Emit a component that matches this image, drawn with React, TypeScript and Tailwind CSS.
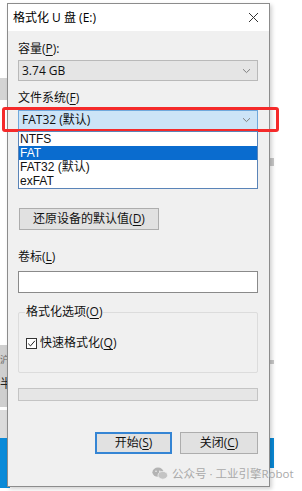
import React from 'react';

const font = { fontFamily: '"Open Sans", "Noto Sans CJK SC", sans-serif' };
const listFont = { fontFamily: '"Liberation Sans", "Noto Sans CJK SC", sans-serif' };

const Chevron: React.FC = () => (
    <svg width="9" height="6" viewBox="0 0 9 6" className="shrink-0">
        <path d="M1 1.2 L4.5 4.6 L8 1.2" fill="none" stroke="#808080" strokeWidth="1" />
    </svg>
);

const U: React.FC<{ children: React.ReactNode }> = ({ children }) => <span className="underline underline-offset-2">{children}</span>;

const WinButton: React.FC<{ children: React.ReactNode; primary?: boolean; className?: string }> = ({ children, primary, className }) => (
    <div
        className={`h-[22px] flex items-center justify-center bg-[#e1e1e1] text-[12px] text-[#111] ${primary ? 'border-2 border-[#3585d4]' : 'border border-[#adadad]'} ${className ?? ''}`}
    >
        {children}
    </div>
);

const App: React.FC = () => {
    return (
        <div className="relative w-[302px] h-[491px] overflow-hidden bg-white" style={font}>
            {/* desktop bits peeking out behind the dialog */}
            <div className="absolute left-0 top-[78px] w-[7px] h-[22px] bg-[#d4d4d4]" />
            <div className="absolute left-0 top-[345px] w-[7px] h-[62px] bg-[#cfcfcf]" />
            <div className="absolute left-0 top-[355px] text-[9px] leading-none text-[#666]">沪</div>
            <div className="absolute left-0 top-[378px] text-[12px] leading-none text-[#222]">半</div>
            <div className="absolute left-0 top-[410px] w-[7px] h-[28px] bg-[#dcdcdc]" />
            <div className="absolute left-0 top-[438px] w-[10px] h-[50px] bg-[#0a8ad8]" />
            <div className="absolute left-[268px] top-[438px] w-[6px] h-[30px] bg-[#0a8ad8]" />
            <div className="absolute left-[270px] top-[158px] w-[4px] h-[8px] bg-[#c9c9c9]" />
            <div className="absolute left-[270px] top-[360px] w-[4px] h-[4px] bg-[#c9c9c9]" />

            {/* dialog window */}
            <div className="absolute left-[7px] top-[3px] w-[263px] h-[484px] border border-[#8c8c8c] bg-[#f0f0f0] shadow-[2px_2px_4px_rgba(0,0,0,0.18)] flex flex-col">
                <div className="h-[27px] bg-white flex items-center justify-between pl-[5px] pr-[10px]">
                    <span className="text-[12px] text-black">格式化 U 盘 (E:)</span>
                    <svg width="11" height="11" viewBox="0 0 11 11">
                        <path d="M1 1 L10 10 M10 1 L1 10" stroke="#333" strokeWidth="1" />
                    </svg>
                </div>

                <div className="flex flex-col pl-[10px] pr-[11px]">
                    <div className="mt-[10px] h-[16px] leading-[16px] text-[12px] text-[#111]">
                        容量(<U>P</U>):
                    </div>
                    <div className="mt-[3px] h-[21px] bg-[#e5e5e5] border border-[#b9b9b9] flex items-center justify-between pl-[3px] pr-[6px]">
                        <span className="text-[12px] text-[#111]">3.74 GB</span>
                        <Chevron />
                    </div>

                    <div className="mt-[9px] h-[16px] leading-[16px] text-[12px] text-[#111]">
                        文件系统(<U>F</U>)
                    </div>
                    <div className="relative mt-[4px]">
                        <div className="h-[20px] bg-[#cce4f7] border border-[#6fa8dc] flex items-center justify-between pl-[3px] pr-[6px]">
                            <span className="text-[12px] text-[#111]">FAT32 (默认)</span>
                            <Chevron />
                        </div>
                        {/* red annotation frame */}
                        <div className="absolute left-[-16px] right-[-21px] top-[-3px] h-[25px] border-[3px] border-[#f52a2a] rounded-[3px]" />
                        {/* open dropdown list */}
                        <div className="absolute left-0 right-0 top-[21px] bg-white border border-[#5a84b8] flex flex-col text-[12px] text-[#111]" style={listFont}>
                            <div className="h-[14px] leading-[14px] pl-[1px]">NTFS</div>
                            <div className="h-[14px] leading-[14px] pl-[1px] bg-[#0a6ccf] text-white">FAT</div>
                            <div className="h-[14px] leading-[14px] pl-[1px]">FAT32 (默认)</div>
                            <div className="h-[14px] leading-[14px] pl-[1px]">exFAT</div>
                        </div>
                    </div>

                    <WinButton className="mt-[78px] w-[140px] ml-[1px]">
                        还原设备的默认值(<U>D</U>)
                    </WinButton>

                    <div className="mt-[19px] h-[16px] leading-[16px] text-[12px] text-[#111]">
                        卷标(<U>L</U>)
                    </div>
                    <div className="mt-[6px] h-[22px] bg-white border border-[#8a8a8a]" />

                    <div className="relative mt-[19px] h-[61px] border border-[#dcdcdc] rounded-[2px]">
                        <span className="absolute left-[6px] top-[-9px] px-[1px] bg-[#f0f0f0] text-[12px] leading-[16px] text-[#111]">
                            格式化选项(<U>O</U>)
                        </span>
                        <div className="flex items-center gap-[3px] mt-[21px] ml-[7px]">
                            <div className="w-[11px] h-[11px] border border-[#333] bg-white flex items-center justify-center">
                                <svg width="9" height="9" viewBox="0 0 9 9">
                                    <path d="M1.2 4.6 L3.5 6.9 L7.9 1.8" fill="none" stroke="#222" strokeWidth="1" />
                                </svg>
                            </div>
                            <span className="text-[12px] text-[#111]">
                                快速格式化(<U>Q</U>)
                            </span>
                        </div>
                    </div>

                    <div className="mt-[15px] h-[13px] bg-[#e6e6e6] border border-[#c4c4c4]" />

                    <div className="mt-[31px] flex justify-end gap-[8px]">
                        <WinButton primary className="w-[77px]">
                            开始(<U>S</U>)
                        </WinButton>
                        <WinButton className="w-[78px]">
                            关闭(<U>C</U>)
                        </WinButton>
                    </div>
                </div>
            </div>

            {/* watermark */}
            <div className="absolute left-[152px] top-[465px] flex items-center gap-[4px] text-[11.5px] text-[#a9a9a9]">
                <svg width="16" height="13" viewBox="0 0 16 13">
                    <ellipse cx="6" cy="5.2" rx="5.6" ry="4.6" fill="#b3b3b3" />
                    <ellipse cx="10.8" cy="8.3" rx="4.8" ry="3.9" fill="#c4c4c4" stroke="#f0f0f0" strokeWidth="0.8" />
                    <circle cx="4" cy="4.2" r="0.8" fill="#f0f0f0" />
                    <circle cx="7.8" cy="4.2" r="0.8" fill="#f0f0f0" />
                </svg>
                <span>公众号 · 工业引擎Robot</span>
            </div>
        </div>
    );
};

export default App;
